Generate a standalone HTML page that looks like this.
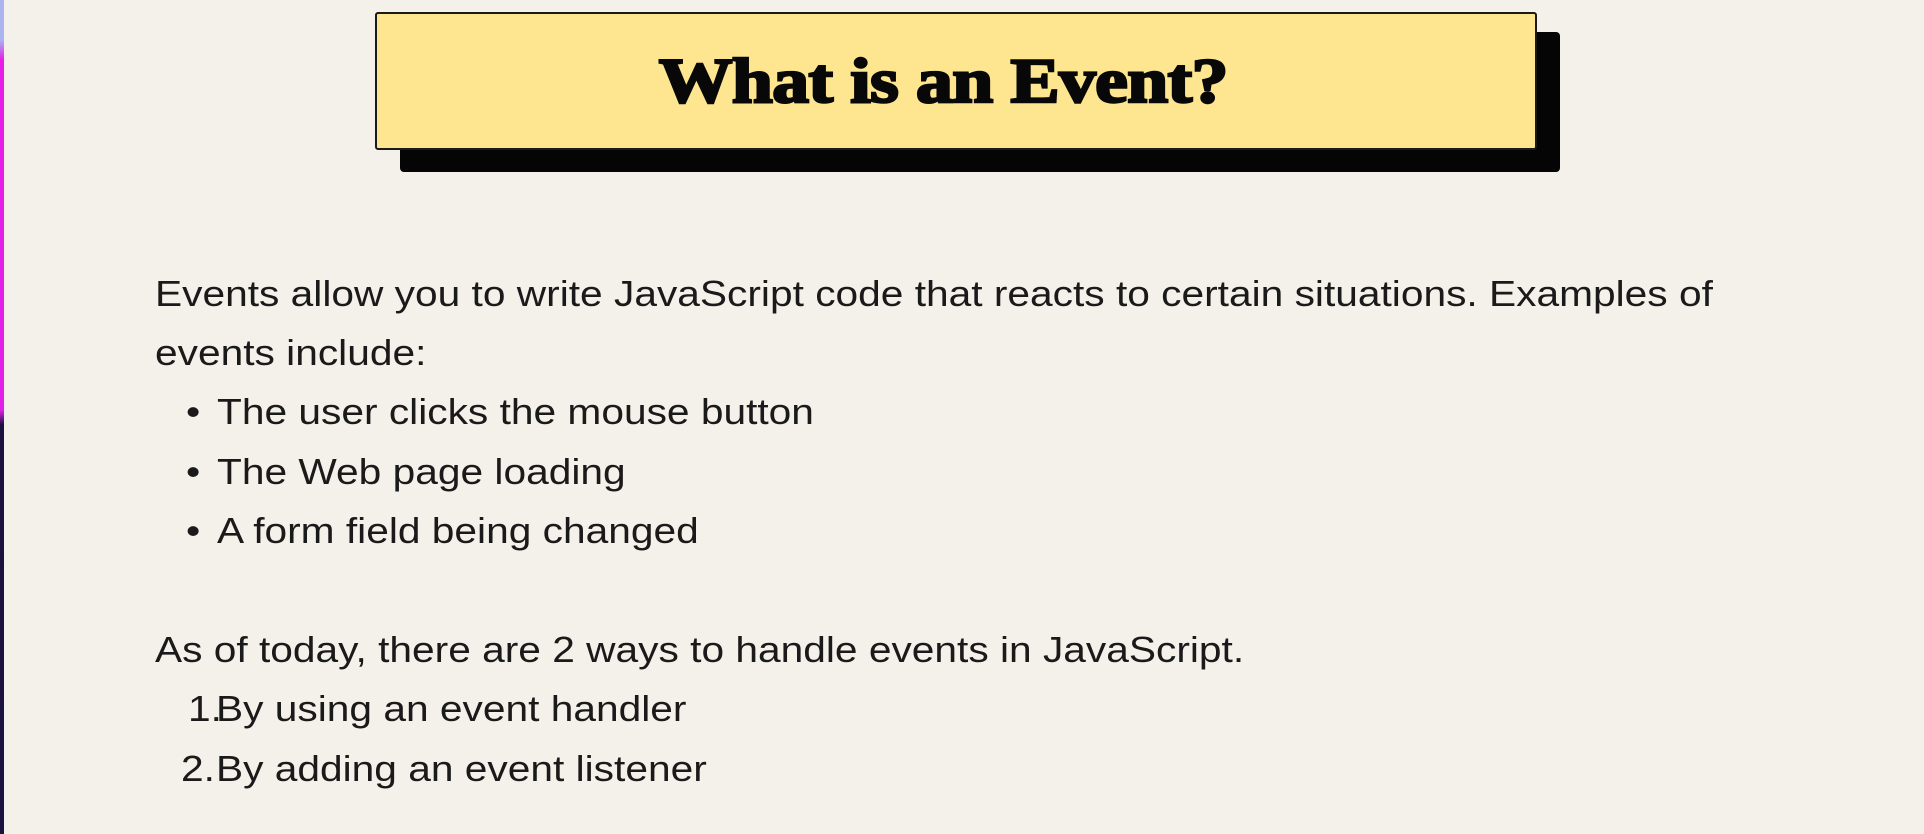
<!DOCTYPE html>
<html><head><meta charset="utf-8"><style>
html,body{margin:0;padding:0}
body{width:1924px;height:834px;background:#f4f0ea;position:relative;overflow:hidden;font-family:"Liberation Sans",sans-serif;color:#1a1a1a}
.strip{position:absolute;left:0;top:0;width:4px;height:834px;background:linear-gradient(#a9b4f0 0,#a9b4f0 40px,#e81ee8 60px,#e020e8 410px,#1b1040 425px,#1a1240 834px)}
.shadow{position:absolute;left:400px;top:32px;width:1160px;height:140px;background:#050505;border-radius:4px}
.box{position:absolute;left:375px;top:12px;width:1162px;height:138px;background:#fde68f;border:2px solid #1a1a1a;border-radius:3px;box-sizing:border-box;display:flex;align-items:center;justify-content:center}
.box h1{margin:0 26px 0 0;font-family:"Liberation Serif",serif;font-weight:900;font-size:64px;letter-spacing:-0.5px;color:#080808;transform:scaleX(1.15);-webkit-text-stroke:2.5px #080808}
.l{position:absolute;font-size:36px;line-height:40px;white-space:nowrap;transform:translateY(-50%) scaleX(1.13);transform-origin:left center}
</style></head><body>
<div class="strip"></div>
<div class="shadow"></div>
<div class="box"><h1>What is an Event?</h1></div>
<div class="l" style="left:155px;top:294px">Events allow you to write JavaScript code that reacts to certain situations. Examples of</div>
<div class="l" style="left:155px;top:353px">events include:</div>
<div class="l" style="left:186px;top:412px">•</div><div class="l" style="left:217px;top:412px">The user clicks the mouse button</div>
<div class="l" style="left:186px;top:472px">•</div><div class="l" style="left:217px;top:472px">The Web page loading</div>
<div class="l" style="left:186px;top:531px">•</div><div class="l" style="left:217px;top:531px">A form field being changed</div>
<div class="l" style="left:155px;top:650px">As of today, there are 2 ways to handle events in JavaScript.</div>
<div class="l" style="left:188px;top:709px">1.</div><div class="l" style="left:216px;top:709px">By using an event handler</div>
<div class="l" style="left:181px;top:769px">2.</div><div class="l" style="left:216px;top:769px">By adding an event listener</div>
</body></html>
